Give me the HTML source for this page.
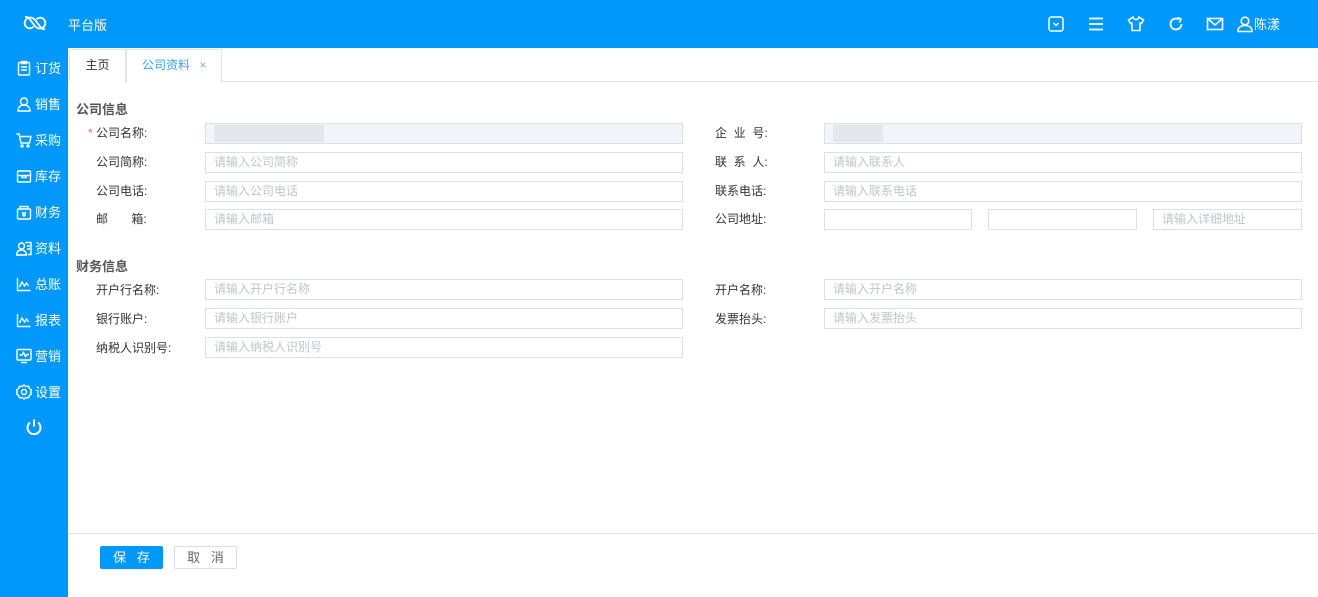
<!DOCTYPE html><html><head><meta charset="utf-8"><style>
*{margin:0;padding:0;box-sizing:border-box}
body{width:1318px;height:597px;overflow:hidden;background:#fff;font-family:"Liberation Sans","Noto Sans CJK SC",sans-serif;font-size:12px;color:#333;position:relative}
.top{position:absolute;left:0;top:0;width:1318px;height:48px;background:#0099fb}
.side{position:absolute;left:0;top:48px;width:68px;height:549px;background:#0099fb}
.ni{position:absolute;left:16px;color:#fff;font-size:13px;display:flex;align-items:center;gap:3px}
.ni svg{width:16px;height:16px}
.tabs{position:absolute;left:68px;top:48px;right:0;height:34px;border-bottom:1px solid #e4e4e4}
.tab{position:absolute;top:1px;height:33px;border:1px solid #e4e4e4;line-height:31px;font-size:12px;background:#fff}
.lbl{position:absolute;font-size:12px;color:#333}
.in{position:absolute;height:21px;border:1px solid #dcdfe6;background:#fff;color:#c0c4cc;font-size:12px;line-height:19px;padding-left:8px}
.dis{background:#f3f4f7}
.sec{position:absolute;left:76px;font-size:13px;font-weight:bold;color:#555}
.ic{position:absolute;top:15px;width:18px;height:18px}
</style></head><body>
<div class="top">
<svg style="position:absolute;left:22px;top:12px" width="26" height="22" viewBox="0 0 26 22" fill="none" stroke="#fff" stroke-width="1.8"><path d="M4 14.5C1 11 3.5 5.5 8.5 5.5c2 0 3.5 1 5 3l4.5 6c1.5 2 3 3 5 2.5"/><path d="M22 7.5c3 3.5.5 9-4.5 9-2 0-3.5-1-5-3L8 7.5C6.5 5.5 5 4.5 3 5"/><path d="M4 14.5c2 2.5 5.5 2.5 7.5 0M22 7.5c-2-2.5-5.5-2.5-7.5 0"/></svg>
<div style="position:absolute;left:68px;top:15px;color:#fff;font-size:13px">平台版</div>
<svg class="ic" style="left:1047px" viewBox="0 0 18 18" fill="none" stroke="#fff" stroke-width="1.5"><rect x="2" y="2" width="14" height="14" rx="2.5"/><path d="M6.5 8l2.5 2.5 2.5-2.5"/></svg>
<svg class="ic" style="left:1087px" viewBox="0 0 18 18" fill="none" stroke="#fff" stroke-width="1.8"><path d="M2 3.5h14M2 9h14M2 14.5h14"/></svg>
<svg class="ic" style="left:1127px" viewBox="0 0 18 18" fill="none" stroke="#fff" stroke-width="1.5"><path d="M6 2L1.5 5 3.5 8.5 5 8v7.5h8V8l1.5.5 2-3.5L12 2c-.5 1.5-1.5 2.5-3 2.5S6.5 3.5 6 2z"/></svg>
<svg class="ic" style="left:1167px" viewBox="0 0 18 18" fill="none" stroke="#fff" stroke-width="1.8"><path d="M14.5 9A5.5 5.5 0 1 1 12 4.4"/><path d="M10.5 2.5l3.5 1.5-1.5 3.5" stroke-width="1.5"/></svg>
<svg class="ic" style="left:1206px" viewBox="0 0 18 18" fill="none" stroke="#fff" stroke-width="1.6"><rect x="1.5" y="3.5" width="15" height="11"/><path d="M1.5 3.5L9 10l7.5-6.5"/></svg>
<svg class="ic" style="left:1236px" viewBox="0 0 18 18" fill="none" stroke="#fff" stroke-width="1.6"><circle cx="9" cy="6" r="3.8"/><path d="M2 16.5c0-4 3-6 7-6s7 2 7 6z"/></svg>
<div style="position:absolute;left:1254px;top:14px;color:#fff;font-size:13px">陈漾</div>
</div>
<div class="side">
<div class="ni" style="top:10px"><svg viewBox="0 0 16 16" fill="none" stroke="#fff" stroke-width="1.4"><rect x="2.5" y="2.5" width="11" height="12.5" rx="1"/><path d="M5.5 1.5h5v2h-5zM5 7h6M5 10h6"/></svg>订货</div>
<div class="ni" style="top:46px"><svg viewBox="0 0 16 16" fill="none" stroke="#fff" stroke-width="1.4"><circle cx="8" cy="5.5" r="3.5"/><path d="M2 15c0-4 2.5-6 6-6s6 2 6 6z"/></svg>销售</div>
<div class="ni" style="top:82px"><svg viewBox="0 0 16 16" fill="none" stroke="#fff" stroke-width="1.4"><path d="M0.5 2h2.5l2 9h8.5l1.5-6.5H4"/><circle cx="6" cy="14" r="1"/><circle cx="12" cy="14" r="1"/></svg>采购</div>
<div class="ni" style="top:118px"><svg viewBox="0 0 16 16" fill="none" stroke="#fff" stroke-width="1.4"><rect x="1.5" y="3" width="13" height="11" rx="1"/><path d="M1.5 7.5h13M6 7.5v2h4v-2"/></svg>库存</div>
<div class="ni" style="top:154px"><svg viewBox="0 0 16 16" fill="none" stroke="#fff" stroke-width="1.4"><rect x="1.5" y="5" width="13" height="10" rx="1"/><path d="M4 5V2.5h8V5M6 8l2 2 2-2M8 10v3M6 11h4"/></svg>财务</div>
<div class="ni" style="top:190px"><svg viewBox="0 0 16 16" fill="none" stroke="#fff" stroke-width="1.4"><circle cx="5.5" cy="6" r="3"/><path d="M0.5 15c0-3 2-5 5-5s5 2 5 5zM9 2.5h6v12h-3M11 6h3M11 9h3"/></svg>资料</div>
<div class="ni" style="top:226px"><svg viewBox="0 0 16 16" fill="none" stroke="#fff" stroke-width="1.4"><path d="M1.5 2v12.5h13M3.5 11l2.5-5 2.5 4 2-3 2 3"/></svg>总账</div>
<div class="ni" style="top:262px"><svg viewBox="0 0 16 16" fill="none" stroke="#fff" stroke-width="1.4"><path d="M1.5 2v12.5h13M3.5 11l2.5-5 2.5 4 2-3 2 3"/></svg>报表</div>
<div class="ni" style="top:298px"><svg viewBox="0 0 16 16" fill="none" stroke="#fff" stroke-width="1.4"><rect x="1" y="1.5" width="14" height="10.5" rx="1"/><path d="M3.5 7h2.5l1.5-2.5 2 4 1.5-2h2M5 14.5h6"/></svg>营销</div>
<div class="ni" style="top:334px"><svg viewBox="0 0 16 16" fill="none" stroke="#fff" stroke-width="1.4"><path d="M8 1l2 1.5 2.5-.3 1 2.3 2 1.5-.8 2 .8 2-2 1.5-1 2.3-2.5-.3L8 15l-2-1.5-2.5.3-1-2.3-2-1.5.8-2-.8-2 2-1.5 1-2.3 2.5.3z"/><circle cx="8" cy="8" r="2.5"/></svg>设置</div>
<svg style="position:absolute;left:25px;top:370px" width="18" height="18" viewBox="0 0 18 18" fill="none" stroke="#fff" stroke-width="2"><path d="M5 4.5a6.5 6.5 0 1 0 8 0M9 1.5v7"/></svg>
</div>
<div class="tabs">
<div class="tab" style="left:1px;width:57px;text-align:center;border-bottom:none">主页</div>
<div class="tab" style="left:58px;width:96px;padding-left:15px;color:#3a9ff5;border-bottom:1px solid #fff;height:34px">公司资料 <span style="color:#8ab;margin-left:6px">×</span></div>
</div>
<div class="sec" style="top:99px">公司信息</div>
<div class="lbl" style="left:88px;top:124px"><span style="color:#f56c6c">*</span> 公司名称:</div>
<div class="lbl" style="left:96px;top:153px">公司简称:</div>
<div class="lbl" style="left:96px;top:182px">公司电话:</div>
<div class="lbl" style="left:96px;top:210px">邮&nbsp;&nbsp;&nbsp;&nbsp;&nbsp;&nbsp;&nbsp;箱:</div>
<div class="in dis" style="left:205px;top:123px;width:478px"><span style="display:inline-block;width:110px;height:17px;margin-top:1px;background:#e4e6ea"></span></div>
<div class="in" style="left:205px;top:152px;width:478px">请输入公司简称</div>
<div class="in" style="left:205px;top:181px;width:478px">请输入公司电话</div>
<div class="in" style="left:205px;top:209px;width:478px">请输入邮箱</div>
<div class="lbl" style="left:715px;top:124px">企&nbsp;&nbsp;业&nbsp;&nbsp;号:</div>
<div class="lbl" style="left:715px;top:153px">联&nbsp;&nbsp;系&nbsp;&nbsp;人:</div>
<div class="lbl" style="left:715px;top:182px">联系电话:</div>
<div class="lbl" style="left:715px;top:210px">公司地址:</div>
<div class="in dis" style="left:824px;top:123px;width:478px"><span style="display:inline-block;width:50px;height:17px;margin-top:1px;background:#e4e6ea"></span></div>
<div class="in" style="left:824px;top:152px;width:478px">请输入联系人</div>
<div class="in" style="left:824px;top:181px;width:478px">请输入联系电话</div>
<div class="in" style="left:824px;top:209px;width:148px"></div>
<div class="in" style="left:988px;top:209px;width:149px"></div>
<div class="in" style="left:1153px;top:209px;width:149px">请输入详细地址</div>
<div class="sec" style="top:256px">财务信息</div>
<div class="lbl" style="left:96px;top:281px">开户行名称:</div>
<div class="lbl" style="left:96px;top:310px">银行账户:</div>
<div class="lbl" style="left:96px;top:339px">纳税人识别号:</div>
<div class="in" style="left:205px;top:279px;width:478px">请输入开户行名称</div>
<div class="in" style="left:205px;top:308px;width:478px">请输入银行账户</div>
<div class="in" style="left:205px;top:337px;width:478px">请输入纳税人识别号</div>
<div class="lbl" style="left:715px;top:281px">开户名称:</div>
<div class="lbl" style="left:715px;top:310px">发票抬头:</div>
<div class="in" style="left:824px;top:279px;width:478px">请输入开户名称</div>
<div class="in" style="left:824px;top:308px;width:478px">请输入发票抬头</div>
<div style="position:absolute;left:68px;top:533px;width:1250px;height:1px;background:#e0e0e0"></div>
<div style="position:absolute;left:100px;top:546px;width:63px;height:23px;background:#0099fb;border-radius:2px;color:#fff;text-align:center;line-height:23px;font-size:13px">保&nbsp;&nbsp;&nbsp;存</div>
<div style="position:absolute;left:174px;top:546px;width:63px;height:23px;border:1px solid #dcdcdc;border-radius:2px;color:#666;text-align:center;line-height:21px;font-size:13px">取&nbsp;&nbsp;&nbsp;消</div>
</body></html>
